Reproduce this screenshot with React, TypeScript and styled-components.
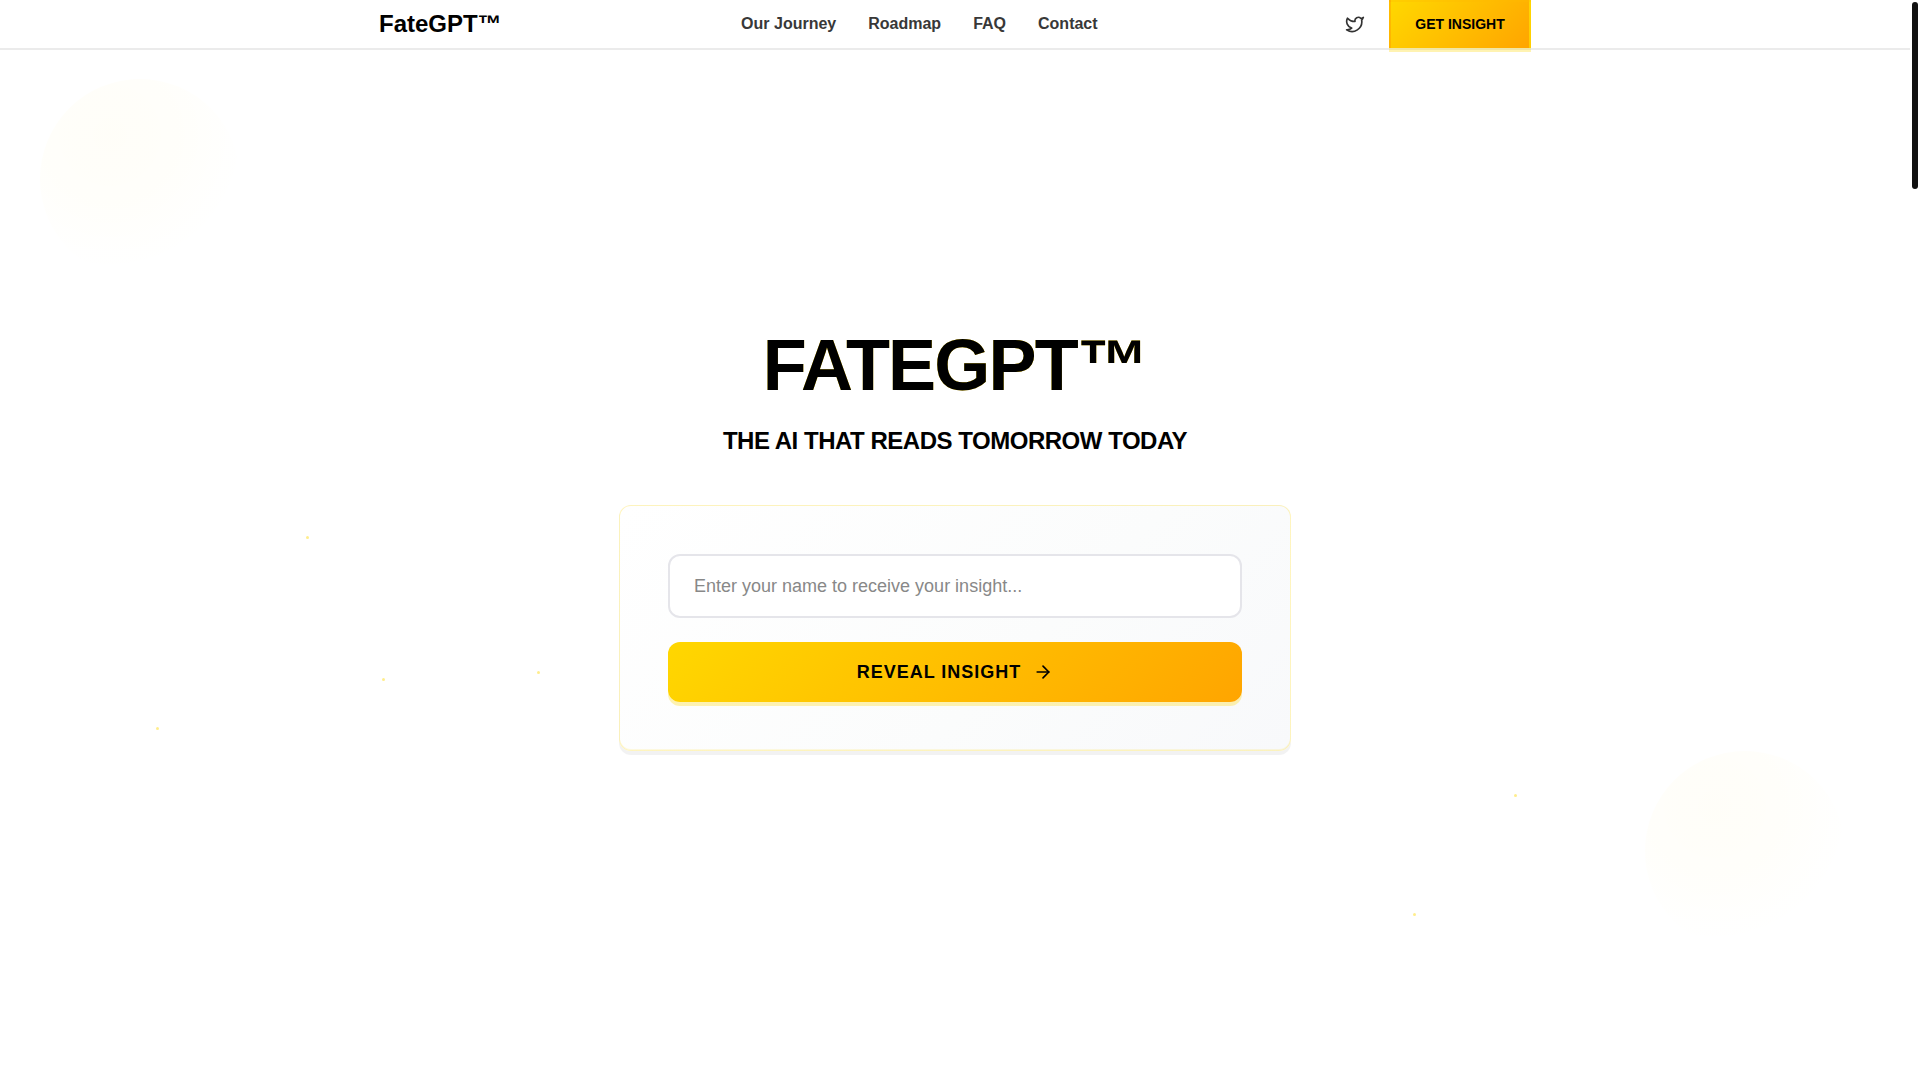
import React from "react";
import styled, { createGlobalStyle } from "styled-components";
import { ArrowRight, Twitter } from "lucide-react";

const GlobalStyle = createGlobalStyle`
  *, *::before, *::after { box-sizing: border-box; }
  body {
    margin: 0;
    background: #fff;
    color: #000;
    font-family: "Liberation Sans", Arial, sans-serif;
  }
`;

const Page = styled.div`
  position: relative;
  min-height: 100vh;
  padding-right: 10px;
  overflow: hidden;
`;

const Header = styled.header`
  position: absolute;
  inset: 0 10px auto 0;
  z-index: 2;
  background: #fff;
  border-bottom: 2px solid #ebebeb;
`;

const HeaderInner = styled.div`
  display: flex;
  align-items: center;
  justify-content: space-between;
  max-width: 1200px;
  height: 48px;
  margin: 0 auto;
  padding: 0 24px;
`;

const Logo = styled.a`
  color: #000;
  font-size: 24px;
  font-weight: 700;
  line-height: 32px;
  text-decoration: none;
`;

const Nav = styled.nav`
  display: flex;
  gap: 32px;
`;

const NavLink = styled.a`
  color: #383838;
  font-size: 16px;
  font-weight: 600;
  line-height: 24px;
  text-decoration: none;
`;

const Actions = styled.div`
  display: flex;
  align-items: center;
  align-self: stretch;
  gap: 24px;
  padding-left: 8px;
`;

const SocialLink = styled.a`
  display: flex;
  color: #333;
`;

const InsightButton = styled.button`
  align-self: stretch;
  min-width: 142px;
  padding: 0 24px 2px;
  border: solid rgba(255, 215, 0, 0.3);
  border-width: 2px 2px 0;
  background: linear-gradient(135deg, #ffd700, #ffa500);
  box-shadow: 0 4px 0 rgba(255, 215, 0, 0.3);
  color: #000;
  font: 700 14px/20px "Liberation Sans", Arial, sans-serif;
  cursor: pointer;
`;

const Hero = styled.main`
  display: flex;
  flex-direction: column;
  align-items: center;
  justify-content: center;
  min-height: 100vh;
  padding: 48px 24px;
`;

const Title = styled.h1`
  margin: 0 0 24px;
  font-size: 72px;
  font-weight: 900;
  line-height: 72px;
  letter-spacing: -0.025em;
  text-shadow: 0 0 0 #ffd700;
`;

const Subtitle = styled.h2`
  margin: 0 0 48px;
  font-size: 24px;
  font-weight: 700;
  line-height: 32px;
  letter-spacing: -0.02em;
`;

const Card = styled.form`
  position: relative;
  display: flex;
  flex-direction: column;
  gap: 24px;
  width: 100%;
  max-width: 672px;
  padding: 48px;
  border: 1px solid rgba(255, 215, 0, 0.25);
  border-radius: 12px;
  background: linear-gradient(135deg, #fff, #fbfcfc 60%, #f8f9fb);
  box-shadow: 0 4px 0 rgba(0, 0, 0, 0.05), inset 0 -1px 0 rgba(255, 215, 0, 0.12);
`;

const NameInput = styled.input`
  width: 100%;
  height: 64px;
  padding: 0 24px;
  border: 2px solid #e5e5ea;
  border-radius: 12px;
  background: #fff;
  color: #000;
  font: 400 18px/24px "Liberation Sans", Arial, sans-serif;

  &::placeholder { color: #888; opacity: 1; }
`;

const RevealButton = styled.button`
  display: flex;
  align-items: center;
  justify-content: center;
  gap: 12px;
  height: 60px;
  border: 0;
  border-radius: 12px;
  background: linear-gradient(135deg, #ffd700, #ffa500);
  box-shadow: 0 4px 0 rgba(255, 215, 0, 0.3);
  color: #000;
  font: 700 18px/24px "Liberation Sans", Arial, sans-serif;
  letter-spacing: 1px;
  cursor: pointer;
`;

const Orb = styled.div<{ $x: string; $y: string }>`
  position: absolute;
  left: ${(p) => p.$x};
  top: ${(p) => p.$y};
  width: 200px;
  height: 200px;
  border-radius: 50%;
  background: radial-gradient(circle at 35% 28%, rgba(255, 205, 0, 0.026), rgba(255, 210, 0, 0.018) 35%, transparent 70%);
  pointer-events: none;
`;

const Spark = styled.span<{ $x: string; $y: string }>`
  position: absolute;
  left: ${(p) => p.$x};
  top: ${(p) => p.$y};
  width: 3px;
  height: 3px;
  border-radius: 50%;
  background: rgba(255, 215, 0, 0.45);
  pointer-events: none;
`;

const ScrollThumb = styled.div`
  position: fixed;
  top: 2px;
  right: 2px;
  z-index: 3;
  width: 6px;
  height: 187px;
  border-radius: 3px;
  background: #111;
`;

const links = [
  { label: "Our Journey", href: "#journey" },
  { label: "Roadmap", href: "#roadmap" },
  { label: "FAQ", href: "#faq" },
  { label: "Contact", href: "#contact" },
];

const sparks = [
  ["306px", "536px"],
  ["382px", "678px"],
  ["537px", "671px"],
  ["156px", "727px"],
  ["1514px", "794px"],
  ["1413px", "913px"],
];

export default function App() {
  return (
    <Page>
      <GlobalStyle />
      <Header>
        <HeaderInner>
          <Logo href="#top">FateGPT™</Logo>
          <Nav>
            {links.map((l) => (
              <NavLink key={l.href} href={l.href}>{l.label}</NavLink>
            ))}
          </Nav>
          <Actions>
            <SocialLink href="#twitter" aria-label="Twitter">
              <Twitter size={20} />
            </SocialLink>
            <InsightButton type="button">GET INSIGHT</InsightButton>
          </Actions>
        </HeaderInner>
      </Header>
      <Orb $x="40px" $y="79px" />
      <Orb $x="1645px" $y="751px" />
      {sparks.map(([x, y]) => (
        <Spark key={x} $x={x} $y={y} />
      ))}
      <Hero id="top">
        <Title>FATEGPT™</Title>
        <Subtitle>THE AI THAT READS TOMORROW TODAY</Subtitle>
        <Card onSubmit={(e) => e.preventDefault()}>
          <NameInput
            type="text"
            aria-label="Your name"
            placeholder="Enter your name to receive your insight..."
          />
          <RevealButton type="submit">
            REVEAL INSIGHT
            <ArrowRight size={20} />
          </RevealButton>
        </Card>
      </Hero>
      <ScrollThumb />
    </Page>
  );
}
